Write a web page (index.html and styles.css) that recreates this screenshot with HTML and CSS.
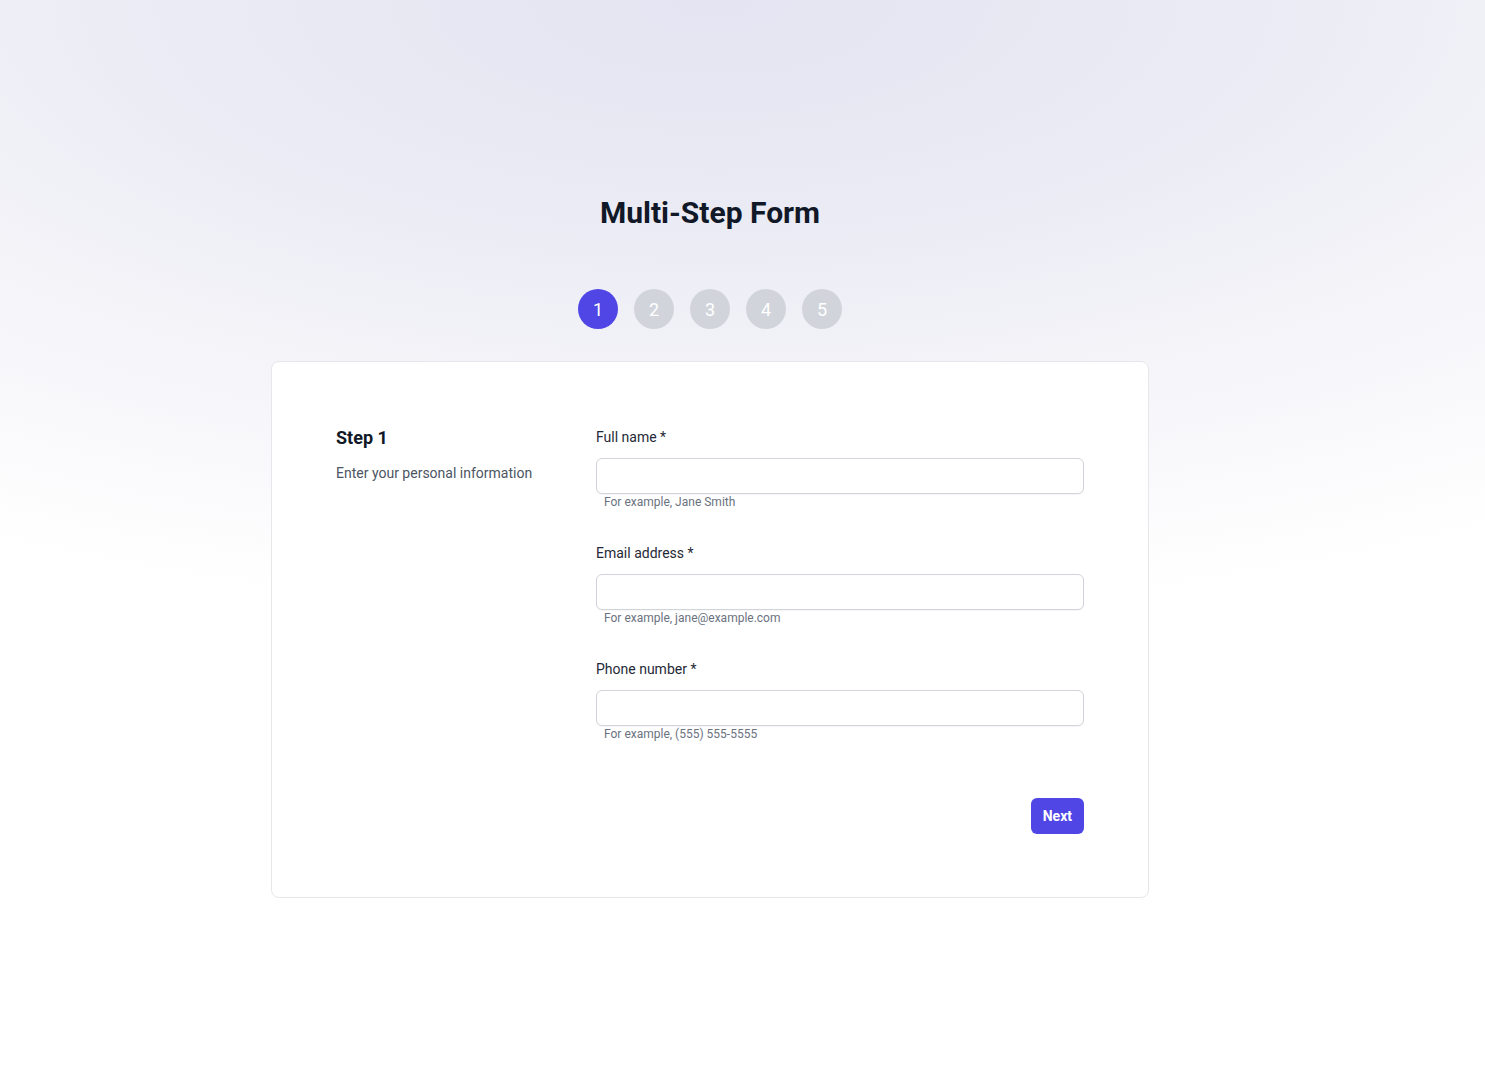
FILE: index.html
```html
<!DOCTYPE html>
<html lang="en">
<head>
<meta charset="utf-8">
<title>Multi-Step Form</title>
<link rel="stylesheet" href="styles.css">
</head>
<body>
<main class="page">
  <h1 class="title">Multi-Step Form</h1>
  <ol class="steps">
    <li class="step active">1</li>
    <li class="step">2</li>
    <li class="step">3</li>
    <li class="step">4</li>
    <li class="step">5</li>
  </ol>
  <section class="card">
    <div class="grid">
      <div class="intro">
        <h2 class="intro-title">Step 1</h2>
        <p class="intro-text">Enter your personal information</p>
      </div>
      <div class="fields">
        <div class="field">
          <label class="label" for="name">Full name *</label>
          <input class="input" id="name" type="text">
          <p class="hint">For example, Jane Smith</p>
        </div>
        <div class="field">
          <label class="label" for="email">Email address *</label>
          <input class="input" id="email" type="email">
          <p class="hint">For example, jane@example.com</p>
        </div>
        <div class="field">
          <label class="label" for="phone">Phone number *</label>
          <input class="input" id="phone" type="tel">
          <p class="hint">For example, (555) 555-5555</p>
        </div>
        <div class="actions">
          <button class="btn" type="button">Next</button>
        </div>
      </div>
    </div>
  </section>
</main>
</body>
</html>
```
FILE: styles.css
```css
* { box-sizing: border-box; }
html, body { margin: 0; padding: 0; }
body {
  min-height: 1091px;
  font-family: Roboto, "Liberation Sans", sans-serif;
  color: #111827;
  background: #ffffff radial-gradient(ellipse 1500px 620px at 48% 0, #e4e4f2 0%, #ececf5 40%, #f6f6fa 70%, #ffffff 100%) no-repeat;
}
.page {
  width: 1420px;
  display: flex;
  flex-direction: column;
  align-items: center;
  padding-top: 195px;
}
.title {
  margin: 0;
  font-size: 30px;
  line-height: 36px;
  font-weight: 700;
  color: #111827;
}
.steps {
  list-style: none;
  margin: 58px 0 0;
  padding: 0;
  display: flex;
  gap: 16px;
}
.step {
  width: 40px;
  height: 40px;
  border-radius: 50%;
  background: #d1d5db;
  color: #fff;
  display: flex;
  align-items: center;
  justify-content: center;
  font-size: 18px;
}
.step.active { background: #4f46e5; }
.card {
  margin-top: 32px;
  width: 878px;
  background: #fff;
  border: 1px solid #e5e7eb;
  border-radius: 8px;
  padding: 64px 64px 63px;
}
.grid {
  display: grid;
  grid-template-columns: 228px 1fr;
  column-gap: 32px;
}
.intro-title {
  margin: 0;
  font-size: 18px;
  line-height: 24px;
  font-weight: 700;
  color: #111827;
}
.intro-text {
  margin: 11px 0 0;
  font-size: 14px;
  line-height: 24px;
  color: #4b5563;
}
.fields { display: flex; flex-direction: column; }
.field { display: flex; flex-direction: column; margin-bottom: 32px; }
.label {
  font-size: 14px;
  line-height: 22px;
  color: #1f2937;
  margin-bottom: 10px;
}
.input {
  height: 36px;
  border: 1px solid #d1d5db;
  border-radius: 6px;
  background: #fff;
  font: inherit;
  padding: 0 10px;
  box-shadow: 0 1px 1px rgba(0,0,0,0.04);
}
.hint {
  margin: 0;
  padding-left: 8px;
  font-size: 12px;
  line-height: 16px;
  color: #6b7280;
}
.actions {
  display: flex;
  justify-content: flex-end;
  margin-top: 24px;
}
.btn {
  height: 36px;
  padding: 0 12px;
  border: 0;
  border-radius: 6px;
  background: #4f46e5;
  color: #fff;
  font-family: inherit;
  font-size: 14px;
  font-weight: 700;
}
```
